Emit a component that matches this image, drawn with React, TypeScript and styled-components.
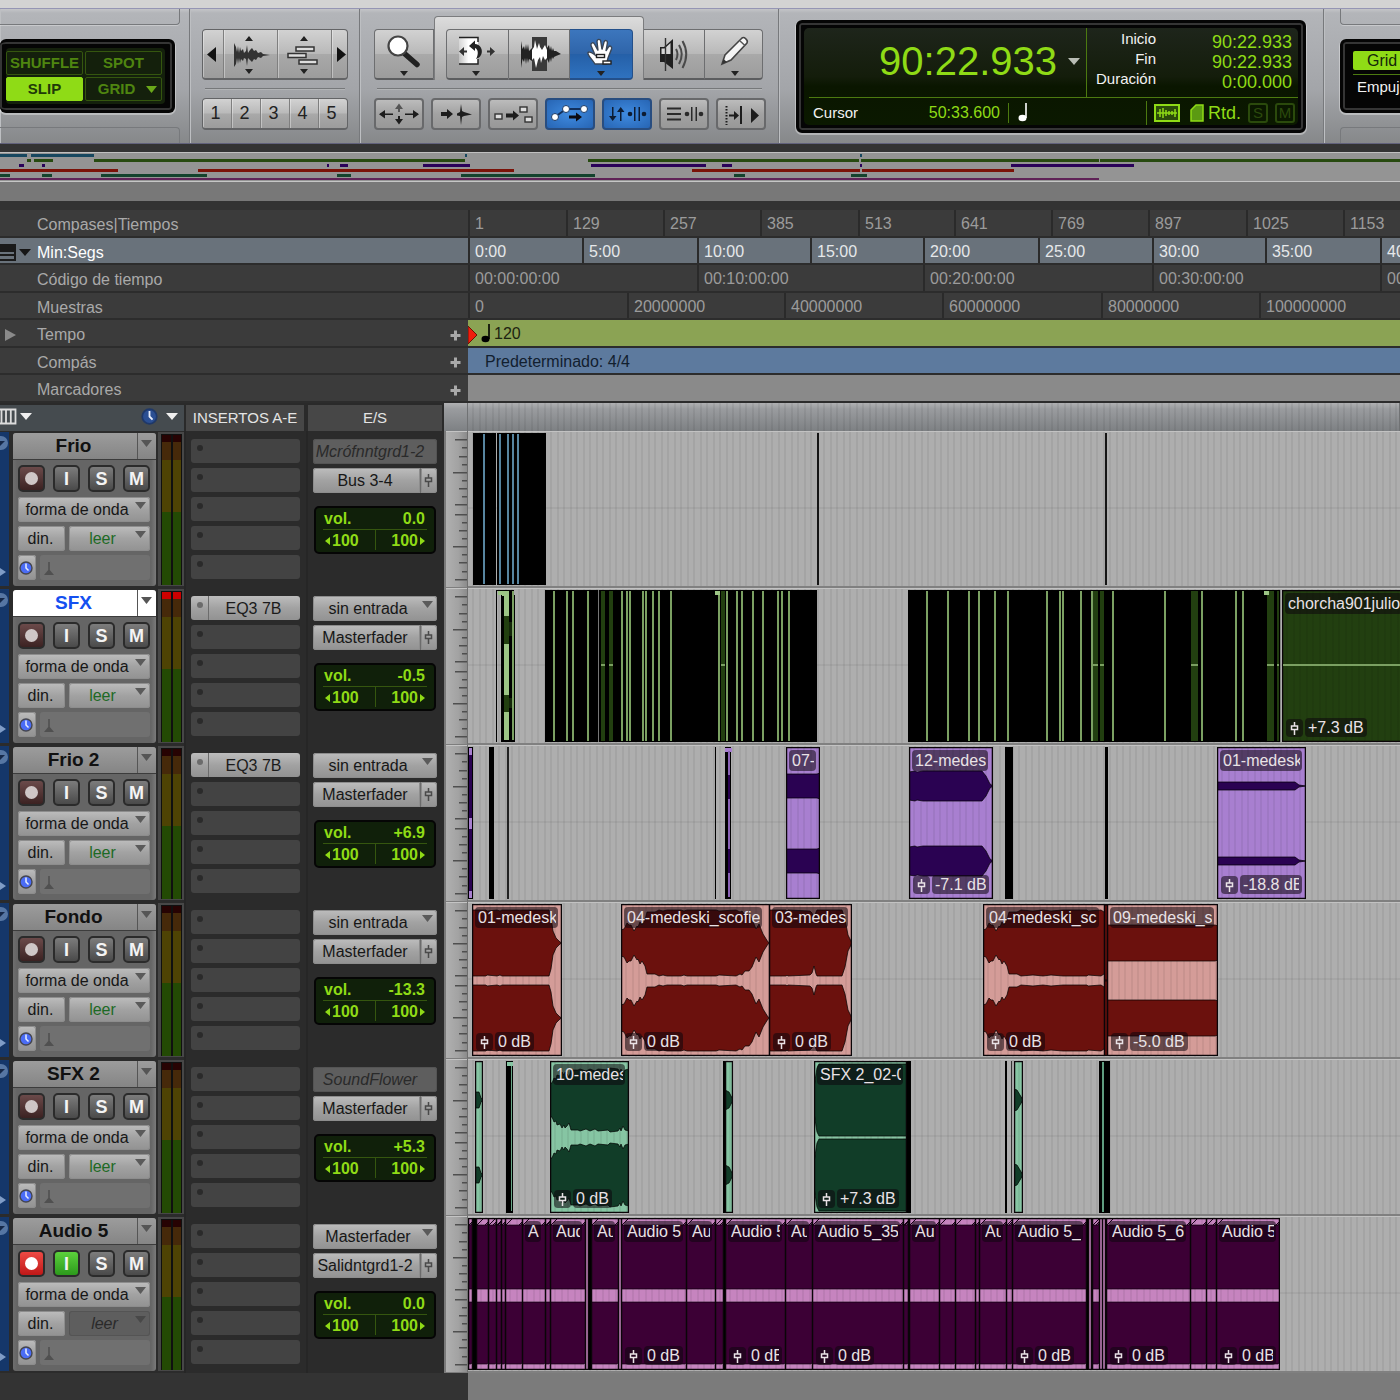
import React from "react";
import styled, { createGlobalStyle, css } from "styled-components";

const LCD = "#8fdb16";
const STRIPES =
  "repeating-linear-gradient(90deg, rgba(0,0,0,0) 0 4px, rgba(0,0,0,0.06) 4px 6px, rgba(0,0,0,0) 6px 11px, rgba(0,0,0,0.06) 11px 13px)";

const GlobalStyle = createGlobalStyle`
  html, body { margin: 0; padding: 0; background: #333; }
  *, *::before, *::after { box-sizing: border-box; }
  body { font-family: "Liberation Sans", Arial, Helvetica, sans-serif; font-size: 16px; overflow: hidden; }
  button, select { font: inherit; color: inherit; margin: 0; padding: 0; border: 0; background: none; cursor: pointer; }
  svg { display: block; }
`;

const Page = styled.div`
  min-height: 100vh;
  display: flex;
  flex-direction: column;
  background: #333;
`;

/* ---------- toolbar ---------- */

const TitleStrip = styled.div`
  height: 9px;
  background: #d3d3d3;
  border-bottom: 1px solid #9595b4;
`;

const Toolbar = styled.header`
  display: flex;
  height: 135px;
  background: linear-gradient(#c4c5c8 0, #b3b5b9 4px, #a3a5a9 60%, #86888a);
  border-bottom: 1px solid #62627c;
`;

const Section = styled.section<{ $w?: number }>`
  flex: ${(p) => (p.$w ? `0 0 ${p.$w}px` : "1 1 0")};
  min-width: 0;
  display: flex;
  flex-direction: column;
  border-right: 1px solid #77797c;
  box-shadow: inset 1px 0 0 #bdbfc2;
  overflow: hidden;
`;

const ModeSection = styled(Section)`
  justify-content: space-between;
  padding-right: 9px;
`;

const GridSection = styled(Section)`
  justify-content: space-between;
  padding-left: 16px;
  border-right: 0;
`;

const Tab = styled.div<{ $edge: "top" | "bottom"; $side: "left" | "right" }>`
  height: 16px;
  border: 1px solid #77797c;
  box-shadow: 0 1px 0 rgba(255, 255, 255, 0.3);
  ${(p) => (p.$edge === "top" ? "border-top: 0;" : "border-bottom: 0;")}
  ${(p) => (p.$side === "right" ? "border-left: 0;" : "border-right: 0;")}
  border-radius: ${(p) =>
    p.$edge === "top"
      ? p.$side === "right" ? "0 0 4px 0" : "0 0 0 4px"
      : p.$side === "right" ? "0 4px 0 0" : "4px 0 0 0"};
`;

const lcdFrame = css`
  border: 3px solid #050505;
  border-radius: 6px;
  background: #050505;
  padding: 4px;
  box-shadow: 0 1px 0 1px rgba(255, 255, 255, 0.35), inset 0 0 0 2px #353535;
`;

const ModeLcd = styled.div`
  ${lcdFrame}
  height: 74px;
  margin-right: 5px;
  border-left-width: 0;
  padding: 6px 7px 6px 6px;
`;

const ModeGrid = styled.div`
  height: 100%;
  display: grid;
  grid-template-columns: 1fr 1fr;
  grid-template-rows: 1fr 1fr;
  gap: 2px;
  padding: 3px 3px 3px 0;
  background: #14200c;
  border-radius: 4px;
`;

const ModeButton = styled.button<{ $on?: boolean; $menu?: boolean }>`
  display: flex;
  align-items: center;
  justify-content: center;
  gap: 11px;
  padding-left: ${(p) => (p.$menu ? 8 : 0)}px;
  font-size: 15px;
  font-weight: bold;
  line-height: 20px;
  border-radius: 2px;
  border: 1px solid ${(p) => (p.$on ? LCD : "#35560f")};
  color: ${(p) => (p.$on ? "#1f3a08" : "#4f8510")};
  background: ${(p) => (p.$on ? LCD : "transparent")};
`;

const ViewControls = styled.div`
  padding: 20px 11px 0 12px;
  display: flex;
  flex-direction: column;
`;

const ToolControls = styled(ViewControls)`
  padding: 7px 13px 0 14px;
`;

const Rule = styled.div`
  height: 2px;
  margin: 8px 3px;
  border-top: 1px solid #76787a;
  border-bottom: 1px solid #b2b4b6;
`;

const buttonFace = css`
  background: linear-gradient(#d2d2d2 0, #b9b9b9 49%, #a9a9a9 51%, #9c9c9c);
`;

const Group = styled.div<{ $h: number }>`
  display: flex;
  height: ${(p) => p.$h}px;
  border: 1px solid #636466;
  border-bottom-width: 2px;
  border-radius: 4px;
  overflow: hidden;
  ${buttonFace}
`;

const GroupButton = styled.button<{ $w?: number }>`
  flex: ${(p) => (p.$w ? `0 0 ${p.$w}px` : "1 1 0")};
  display: flex;
  align-items: center;
  justify-content: center;
  padding-right: 3px;
  font-size: 18px;
  color: #222;
  border-right: 1px solid #7f7f7f;
  box-shadow: inset 1px 0 0 rgba(255, 255, 255, 0.35);
  &:last-child { border-right: 0; }
`;

const ToolRow = styled.div`
  display: flex;
  align-items: flex-end;
  height: 64px;
`;

const SmartTool = styled.div`
  display: flex;
  align-items: flex-end;
  height: 64px;
  padding: 0 10px 0 11px;
  border: 1px solid #7b7c7e;
  border-bottom: 0;
  border-radius: 4px 4px 0 0;
  background: linear-gradient(#dcdcdc, #bcbcbc 60%, #a6a6a6);
`;

const ToolButton = styled.button<{ $w: number; $on?: boolean; $start?: boolean; $end?: boolean }>`
  flex: 0 0 ${(p) => p.$w}px;
  height: 51px;
  ${buttonFace}
  border: 1px solid #6d6e70;
  border-left-width: ${(p) => (p.$start ? 1 : 0)}px;
  border-bottom: 2px solid #5c5d5f;
  border-radius: ${(p) => (p.$start ? 4 : 0)}px ${(p) => (p.$end ? 4 : 0)}px ${(p) => (p.$end ? 4 : 0)}px ${(p) => (p.$start ? 4 : 0)}px;
  overflow: hidden;
  ${(p) =>
    p.$on &&
    css`
      background: linear-gradient(#3c76bd 0, #2f65aa 49%, #2560a8 51%, #2f72bf);
      border-color: #24508a;
    `}
`;

const OptionRow = styled.div`
  display: flex;
  gap: 7px;
`;

const OptionButton = styled.button<{ $on?: boolean }>`
  width: 50px;
  height: 32px;
  border: 2px solid #68696b;
  border-radius: 4px;
  background: linear-gradient(#bcbcbc, #a2a2a2 50%, #989898);
  ${(p) =>
    p.$on &&
    css`
      background: radial-gradient(#3f8be0, #2765b4);
      border-color: #284d80;
    `}
  svg { margin: -2px; }
`;

/* ---------- counter ---------- */

const Counter = styled.div`
  ${lcdFrame}
  margin: 11px 17px 0 17px;
  height: 113px;
  padding: 5px;
`;

const CounterFace = styled.div`
  height: 100%;
  display: grid;
  grid-template-rows: 1fr 27px;
  padding: 0 0 0 5px;
  border-radius: 5px;
  background: linear-gradient(#1e251b, #141d0b 50%, #0a1600 60%, #0b1900);
`;

const CounterTop = styled.div`
  display: flex;
  border-bottom: 1px solid #4c7a10;
`;

const MainTime = styled.div`
  flex: 1;
  display: flex;
  align-items: center;
  justify-content: flex-end;
  gap: 11px;
  padding: 0 6px 3px 0;
  font-size: 40px;
  line-height: 44px;
  color: ${LCD};
`;

const Selection = styled.dl`
  flex: 0 0 212px;
  margin: 0;
  padding: 1px 6px 0 0;
  display: grid;
  grid-template-columns: 69px 1fr;
  grid-auto-rows: 20px;
  align-content: start;
  text-align: right;
  border-left: 1px solid #4c7a10;
  dt { color: #f2f2f2; font-size: 15px; line-height: 20px; }
  dd { margin: 0; color: ${LCD}; font-size: 18px; line-height: 27px; }
`;

const CounterBottom = styled.div`
  display: flex;
  align-items: center;
  padding-top: 2px;
`;

const CursorBox = styled.div`
  flex: 0 0 200px;
  height: 20px;
  display: flex;
  justify-content: space-between;
  align-items: center;
  padding: 0 8px 0 4px;
  border-right: 1px solid #4c7a10;
  color: ${LCD};
  line-height: 18px;
  span { color: #f2f2f2; font-size: 15px; }
`;

const NoteBox = styled.div`
  flex: 1;
  padding-left: 9px;
`;

const StatusBox = styled.div`
  flex: 0 0 152px;
  height: 24px;
  display: flex;
  align-items: center;
  gap: 3px;
  padding-left: 7px;
  border-left: 1px solid #4c7a10;
  color: ${LCD};
  font-size: 18px;
  line-height: 20px;
`;

const StatusFlag = styled.span`
  width: 20px;
  height: 20px;
  margin-left: 4px;
  border: 2px solid #2b4a0c;
  border-radius: 3px;
  color: #2b4a0c;
  font-size: 15px;
  line-height: 16px;
  text-align: center;
`;

const NudgeLcd = styled.div`
  ${lcdFrame}
  width: 160px;
  height: 74px;
  padding: 9px 10px;
`;

const GridButton = styled.button`
  display: block;
  width: 130px;
  height: 19px;
  padding-left: 14px;
  text-align: left;
  line-height: 19px;
  color: #14260a;
  background: ${LCD};
  border-radius: 2px;
`;

const NudgeLabel = styled.div`
  margin-top: 4px;
  padding: 2px 0 0 4px;
  border-top: 1px solid #4c7a10;
  font-size: 15px;
  line-height: 20px;
  color: #f2f2f2;
`;

/* ---------- overview and rulers ---------- */

const Overview = styled.div`
  margin-top: 8px;
  height: 30px;
  background: #949494;
  border-top: 1px solid #c0c0c0;
  border-bottom: 1px solid #c6c6c6;
`;

const OverviewBase = styled.div`
  height: 19px;
  background: #787878;
`;

const Rulers = styled.div`
  margin-top: 9px;
  display: grid;
  grid-template-columns: 468px 1fr;
  grid-template-rows: 28px 27px 28px 27px 28px 27px 28px;
`;

const RulerName = styled.div<{ $on?: boolean }>`
  display: flex;
  align-items: center;
  line-height: 22px;
  padding: 4px 7px 0 0;
  border-bottom: 2px solid #2c2c2c;
  color: ${(p) => (p.$on ? "#fff" : "#a9a9a9")};
  background: ${(p) => (p.$on ? "#69727b" : "#3b3b3b")};
`;

const RulerLead = styled.span`
  flex: 0 0 37px;
`;

const RulerText = styled.span`
  flex: 1;
`;

const RulerTrack = styled.div<{ $bg?: string; $fg?: string }>`
  display: flex;
  min-width: 0;
  overflow: hidden;
  line-height: 27px;
  border-bottom: 2px solid #2c2c2c;
  color: ${(p) => p.$fg || "#9b9b9b"};
  background: ${(p) => p.$bg || "#3b3b3b"};
`;

const Mark = styled.span`
  flex: none;
  padding-left: 5px;
  border-left: 2px solid #2a2a2a;
`;

const TempoMark = styled.span`
  display: flex;
  align-items: center;
  gap: 3px;
  svg:first-child { margin-top: 4px; }
`;

const MeterMark = styled.span`
  padding-left: 17px;
`;

/* ---------- track list ---------- */

const Columns = styled.div`
  display: grid;
  grid-template-columns: 184px 122px 138px 24px 1fr;
  height: 28px;
  background: #2a2a2a;
`;

const ColumnTools = styled.div`
  display: flex;
  align-items: center;
  margin: 2px 0;
  padding: 0 5px 3px 0;
  background: #454b4f;
  svg + svg { margin-left: 3px; }
`;

const Spacer = styled.span`
  flex: 1;
`;

const ColumnHead = styled.div`
  margin: 2px 2px;
  background: #474747;
  color: #e4e4e4;
  font-size: 15px;
  line-height: 26px;
  text-align: center;
`;

const ColumnBar = styled.div<{ $stripes?: boolean }>`
  border-right: 1px solid #707274;
  border-bottom: 1px solid #5c5e60;
  background: ${(p) => (p.$stripes ? `${STRIPES}, ` : "")}linear-gradient(#b0b1b3 0, #9a9c9f 20%, #7c7f82);
`;

const TrackRow = styled.article`
  display: grid;
  grid-template-columns: 11px 147px 26px 122px 138px 24px 1fr;
  height: 157px;
  background: #2b2b2b;
`;

const Strip = styled.div`
  margin: 1px 2px 2px 0;
  background: #15376a;
  display: flex;
  flex-direction: column;
  justify-content: space-between;
  padding: 4px 0 9px;
  overflow: hidden;
`;

const Panel = styled.div`
  margin: 2px;
  padding: 0 6px 0 5px;
  background: linear-gradient(90deg, #6e6e6e, #656565 4px, #656565 138px, #7a7a7a);
  border-radius: 3px;
  display: flex;
  flex-direction: column;
  gap: 4px;
`;

const NameBar = styled.div<{ $on?: boolean }>`
  display: flex;
  height: 27px;
  margin: 0 -6px 0 -5px;
  border-bottom: 1px solid #3c3c3c;
  border-radius: 3px 3px 0 0;
  background: ${(p) => (p.$on ? "#fff" : "linear-gradient(#9c9c9c, #858585)")};
`;

const NameButton = styled.button<{ $on?: boolean }>`
  flex: 1;
  padding-right: 3px;
  font-size: 19px;
  font-weight: bold;
  line-height: 26px;
  color: ${(p) => (p.$on ? "#1450f0" : "#111")};
`;

const NameMenu = styled.button`
  flex: 0 0 19px;
  padding: 0 0 6px 3px;
  border-left: 1px solid #555;
`;

const SwitchRow = styled.div`
  display: flex;
  justify-content: space-between;
  height: 29px;
  padding: 1px 0 0;
`;

const SwitchButton = styled.button<{ $tone?: "rec" | "armed" | "green" }>`
  width: 27px;
  height: 27px;
  display: flex;
  align-items: center;
  justify-content: center;
  border: 2px solid #2b2b2b;
  border-radius: 5px;
  font-size: 18px;
  font-weight: bold;
  line-height: 22px;
  color: #f4f4f4;
  background: ${(p) =>
    p.$tone === "rec"
      ? "linear-gradient(#6b4a4a, #3c2222)"
      : p.$tone === "armed"
      ? "linear-gradient(#ee4a44, #c01818)"
      : p.$tone === "green"
      ? "linear-gradient(#5cd03c, #2c9a1c)"
      : "linear-gradient(#7c7c7c, #4a4a4a)"};
`;

const FieldRow = styled.div`
  display: flex;
  gap: 4px;
  height: 25px;
`;

const face = css<{ $off?: boolean }>`
  height: 25px;
  border-radius: 3px;
  background: ${(p) => (p.$off ? "#5e5e5e" : "linear-gradient(#bdbdbd, #a2a2a2 50%, #929292)")};
  box-shadow: inset 0 0 0 1px ${(p) => (p.$off ? "#545454" : "#8d8d8d")};
  color: ${(p) => (p.$off ? "#2a2a2a" : "#171717")};
  font-style: ${(p) => (p.$off ? "italic" : "normal")};
`;

const SelectBox = styled.label<{ $off?: boolean; $green?: boolean }>`
  ${face}
  flex: 1;
  min-width: 0;
  display: grid;
  ${(p) => p.$green && "color: #1d6a25;"}
  select {
    grid-area: 1 / 1;
    width: 100%;
    appearance: none;
    line-height: 25px;
    text-align: center;
    font-style: inherit;
    color: inherit;
    opacity: 1;
    padding-right: ${(p) => (p.$off ? 10 : 14)}px;
  }
  svg { grid-area: 1 / 1; justify-self: end; margin: 5px 4px 0 0; pointer-events: none; }
`;

const SmallButton = styled.button<{ $w: number }>`
  ${face}
  flex: 0 0 ${(p) => p.$w}px;
  display: flex;
  align-items: center;
  justify-content: center;
  padding-right: 2px;
`;

const GroupSlot = styled.div`
  flex: 1;
  border-radius: 3px;
  background: #707070;
  padding: 7px 0 0 3px;
`;

const MeterCell = styled.div`
  margin: 1px 0 2px;
  padding: 2px 2px 1px 3px;
  background: #474747;
`;

const Meter = styled.div<{ $clip?: boolean }>`
  height: 100%;
  display: grid;
  grid-template-columns: 1fr 1fr;
  gap: 2px;
  padding: 1px 1px 0;
  background: #101010;
  span {
    background: linear-gradient(
      ${(p) => (p.$clip ? "#cc0000" : "#270303")} 0 7px,
      #46290a 7px 25px,
      #4e4304 25px 77px,
      #234a04 77px
    );
  }
`;

const Slots = styled.div`
  border-left: 2px solid #262626;
  padding: 8px 6px 0 5px;
  display: flex;
  flex-direction: column;
  gap: 5px;
`;

const Slot = styled.button<{ $used?: boolean }>`
  display: flex;
  height: 24px;
  border-radius: 3px;
  line-height: 25px;
  color: #1b1b1b;
  background: ${(p) => (p.$used ? "linear-gradient(#bdbdbd, #a2a2a2 50%, #929292)" : "#434343")};
  span { flex: 1; padding-right: 2px; border-left: ${(p) => (p.$used ? "1px solid #6c6c6c" : "0")}; }
  svg { margin: 0 4px 0 5px; }
`;

const Io = styled.div`
  padding: 8px 7px 0 5px;
  display: flex;
  flex-direction: column;
  gap: 4px;
  border-left: 2px solid #262626;
`;

const OutputName = styled.button`
  ${face}
  flex: 1;
  padding-right: 3px;
  border-radius: 3px 0 0 3px;
  line-height: 25px;
`;

const OutputFader = styled.button`
  ${face}
  flex: 0 0 17px;
  border-radius: 0 3px 3px 0;
  border-left: 1px solid #6c6c6c;
  padding-left: 3px;
`;

const OutputRow = styled.div`
  display: flex;
  height: 25px;
`;

const VolumeLcd = styled.div`
  margin: 9px 1px 0;
  height: 48px;
  border: 2px solid #050505;
  border-radius: 5px;
  background: #10200a;
  padding: 1px 7px 3px;
  font-weight: bold;
  line-height: 20px;
  color: ${LCD};
`;

const VolumeLine = styled.div`
  display: flex;
  justify-content: space-between;
  height: 21px;
  padding: 0 2px 0 1px;
  border-bottom: 1px solid #35560f;
`;

const PanLine = styled.div`
  display: grid;
  grid-template-columns: 1fr 1fr;
  height: 20px;
  line-height: 20px;
  span { display: flex; align-items: center; gap: 2px; height: 20px; padding: 2px 0 0 2px; }
  span + span { justify-content: flex-end; padding: 2px 2px 0 0; border-left: 1px solid #35560f; }
`;

const Scale = styled.div`
  border-left: 2px solid #7a7a7a;
  border-right: 1px solid #6f6f6f;
  border-bottom: 1px solid #7d7d7d;
  background: linear-gradient(90deg, #b0b0b0, #a2a2a2 60%, #8b8b8b);
  box-shadow: inset 0 1px 0 #c4c4c4;
  overflow: hidden;
`;

const Lane = styled.div`
  position: relative;
  overflow: hidden;
  border-bottom: 2px solid #808080;
  background: linear-gradient(#c2c2c2 0 1px, rgba(0,0,0,0) 1px 76px, rgba(0,0,0,.05) 76px 78px, rgba(0,0,0,0) 78px), ${STRIPES}, #aeaeae;
`;

const LaneArt = styled.svg`
  position: absolute;
  left: 0;
  top: 2px;
`;

const ClipBox = styled.div`
  position: absolute;
  top: 2px;
  height: 152px;
  overflow: hidden;
`;

const ClipSvg = styled.svg`
  position: absolute;
  left: 0;
  top: 0;
`;

const ClipName = styled.div`
  position: absolute;
  left: 3px;
  top: 3px;
  max-width: calc(100% - 7px);
  height: 21px;
  padding: 0 2px 0 3px;
  border-radius: 4px;
  background: rgba(12, 6, 12, 0.55);
  color: #e9e2e6;
  line-height: 22px;
  white-space: nowrap;
  span { display: block; overflow: hidden; }
`;

const Gain = styled.div`
  position: absolute;
  left: 4px;
  right: 4px;
  bottom: 5px;
  display: flex;
  gap: 2px;
  height: 19px;
  color: #e9e2e6;
  white-space: nowrap;
`;

const GainIcon = styled.span`
  flex: 0 0 17px;
  height: 18px;
  margin-top: 1px;
  padding: 2px 0 0 4px;
  border-radius: 4px;
  background: rgba(12, 6, 12, 0.55);
`;

const GainText = styled.span`
  min-width: 0;
  padding: 0 3px;
  border-radius: 4px;
  line-height: 20px;
  background: rgba(12, 6, 12, 0.55);
  span { display: block; overflow: hidden; }
`;

const Footer = styled.div`
  flex: 1;
  display: grid;
  grid-template-columns: 468px 1fr;
  div + div { background: #7b7b7b; }
`;

/* ---------- drawings ---------- */

const Tri = ({ w = 12, h = 7, c = "#4a4a4a" }: { w?: number; h?: number; c?: string }) => (
  <svg width={w} height={h} viewBox="0 0 12 7" preserveAspectRatio="none"><path d="M0 0H12L6 7Z" fill={c} /></svg>
);
const Side = ({ left, c = "#111", w = 9, h = 15 }: { left?: boolean; c?: string; w?: number; h?: number }) => (
  <svg width={w} height={h} viewBox="0 0 9 15" preserveAspectRatio="none"><path d={left ? "M9 0V15L0 7.5Z" : "M0 0V15L9 7.5Z"} fill={c} /></svg>
);
const Fader = ({ c = "#4a4a4a" }: { c?: string }) => (
  <svg width="9" height="15" viewBox="0 0 9 15" fill="none" stroke={c} strokeWidth="1.5"><path d="M4.5 1V5M4.5 8.500V14" /><rect x="1.500" y="5" width="6" height="3.500" /></svg>
);
const Plus = () => (
  <svg width="11" height="11" viewBox="0 0 11 11"><path d="M4 0.500H7V4H10.500V7H7V10.500H4V7H0.500V4H4Z" fill="#a9a9a9" /></svg>
);
const Clock = ({ size = 14, bright }: { size?: number; bright?: boolean }) => (
  <svg width={size} height={size} viewBox="0 0 14 14"><circle cx="7" cy="7" r="6" fill={bright ? "#4a6cf5" : "#2b4f93"} stroke={bright ? "#44454f" : "#1f3868"} strokeWidth="1.4" /><path d="M7 2.500V7L9.500 9.500" stroke="#e8eefc" strokeWidth="1.500" fill="none" /></svg>
);
const Note = ({ c }: { c: string }) => (
  <svg width="10" height="19" viewBox="0 0 10 19"><ellipse cx="4.500" cy="15" rx="4" ry="3.200" fill={c} /><path d="M8 0V15" stroke={c} strokeWidth="1.600" /></svg>
);
const WaveGlyph = () => (
  <path d="M0 12V-12L2-8 3-3 4-9 5-2 6-8 7-4 9-6 10-2 12-4 13-10 14-2 16-5 18-7 20-4 22-5 24-2 27-3 29-1 36 0 29 1 27 3 24 2 22 5 20 4 18 7 16 5 14 3 13 11 12 4 10 3 9 6 7 4 6 8 5 3 4 9 3 3 2 9Z" />
);

const ZoomAudio = () => (
  <svg width="50" height="48" viewBox="0 0 50 48" fill="#333"><path d="M21 11L25 6 29 11ZM21 39H29L25 44Z" fill="#222" /><g transform="translate(10 25)"><WaveGlyph /></g></svg>
);
const ZoomMidi = () => (
  <svg width="50" height="48" viewBox="0 0 50 48"><path d="M22 11L26 6 30 11ZM22 39H30L26 44Z" fill="#222" /><g fill="#ddd" stroke="#333" strokeWidth="1.500"><rect x="18" y="17" width="18" height="4" /><rect x="10" y="23.500" width="18" height="4" /><rect x="21" y="30" width="18" height="4" /></g></svg>
);

const ToolMagnifier = () => (
  <svg width="60" height="48" viewBox="0 0 60 48"><path d="M30 24L42 34.500" stroke="#222" strokeWidth="5.500" strokeLinecap="round" /><circle cx="23" cy="16" r="9.500" fill="#fff" stroke="#444" strokeWidth="2.200" /><path d="M25 41H33L29 46Z" fill="#222" /></svg>
);
const ToolTrim = () => (
  <svg width="60" height="48" viewBox="0 0 60 48"><defs><linearGradient id="trim"><stop offset="0" stopColor="#fff" stopOpacity=".3" /><stop offset=".5" stopColor="#fff" /></linearGradient></defs><path d="M12 7H31V34H12Z" fill="url(#trim)" /><path d="M12 7.500H31V12M12 34H31V29M31 17V20" stroke="#222" strokeWidth="1.500" fill="none" /><path d="M22 16L28 10.500V14C37 15 37 27 29 29 32 24 31 19 28 18V21Z" fill="#222" /><path d="M12 21.500L17 17V20.500H20V22.500H17V26ZM48 21.500L43 17V20.500H40V22.500H43V26Z" fill="#333" /><path d="M25 41H33L29 46Z" fill="#222" /></svg>
);
const ToolSelect = () => (
  <svg width="60" height="48" viewBox="0 0 60 48"><rect x="23" y="7" width="15" height="34" fill="#3a3a3a" /><g fill="#222" transform="translate(12 24)"><path d="M0 14V-13L1.500-5 3-8 4-4 5-10 6-4 7-10 8-3 11-6V7L8 5 7 9 6 4 5 10 4 4 3 8 1.500 5Z" /><path d="M26-6L28-9 29-4 30-8 31-3 32-6 33-3 35-3 40 0 35 2 33 3 32 5 31 3 30 8 29 4 28 9 26 5Z" /></g><path d="M23 20L25 17 26 10 28 19 30 13 31 17 33 20 36 15 38 20V28L36 30 34 26 32 33 31 27 29 30 27 38 25 28 23 30Z" fill="#fff" /></svg>
);
const ToolHand = () => (
  <svg width="60" height="48" viewBox="0 0 60 48"><path d="M25 34C22 29 17 25 18 22.500 20 20.500 23 23.500 25 25L21 15.500C20.500 12.500 23.500 12 24.500 14L28 20.500 27 11.500C27 8.800 30.300 8.800 30.700 11L32 19.500 34 12C35 9.500 37.800 10.500 37.400 13L36 21 38.500 17C40 15 42.300 16.500 41.500 19L38 28 36.500 34Z" fill="#fff" stroke="#3a4656" strokeWidth="1.400" /><rect x="26.500" y="24.500" width="8" height="3" fill="#fff" stroke="#222" strokeWidth="1.400" /><rect x="33" y="31" width="8" height="3" fill="#fff" stroke="#222" strokeWidth="1.400" /><path d="M27 41H35L31 46Z" fill="#222" /></svg>
);
const ToolSpeaker = () => (
  <svg width="60" height="48" viewBox="0 0 60 48"><path d="M16 17H20L29 9V39L20 32H16Z" fill="#1f1f1f" /><path d="M17.500 18.500H20.500L26.500 13V24H17.500Z" fill="#d4d4d4" /><path d="M21.500 8V41" stroke="#333" strokeWidth="1.400" /><g fill="none" stroke="#4a4a4a" strokeWidth="2"><path d="M32 19Q35 24 32 30" /><path d="M35 15Q40.500 24 35 34" /><path d="M38.500 11Q46 24 38.500 38" /></g></svg>
);
const ToolPencil = () => (
  <svg width="58" height="48" viewBox="0 0 58 48"><path d="M17 34L20 25 37 8C39 6.500 43.500 10 42 13L26 30Z" fill="#f5f5f5" stroke="#444" strokeWidth="1.600" /><path d="M17 34L18.500 29 22 32Z" fill="#333" /><path d="M35 11L40 15.500" stroke="#555" strokeWidth="1.500" /><path d="M26 41H34L30 46Z" fill="#222" /></svg>
);

const optionArt: React.ReactNode[] = [
  <g key="a" fill="#1d1d1d"><path d="M6 15.500H19V17H6ZM31 15.500H44V17H31Z" /><path d="M5 16.200L11 12V20.500ZM45 16.200L39 12V20.500ZM25 26.500L21 21H24V18H26V21H29Z" /><path d="M25 5.500L21 11H24V14H26V11H29Z" fill="#555" /></g>,
  <g key="b" fill="#1d1d1d"><path d="M10 14H16V11L22 16 16 21V18H10Z" /><path d="M26 15.500L29 14 30 6 31 13 33 14 41 16.500 33 18 31 19 30 27 29 18 26 17.500Z" /></g>,
  <g key="c" fill="#1d1d1d"><path d="M18 15.500H25V12.500L31 17.500 25 22.500V19.500H18Z" /><g fill="#ddd" stroke="#333" strokeWidth="1.400"><rect x="7" y="16" width="7" height="5" /><rect x="32" y="9" width="7" height="5" /><rect x="37" y="19" width="7" height="5" /></g></g>,
  <g key="d"><path d="M10 19L21 11H39" fill="none" stroke="#12305c" strokeWidth="1.800" /><path d="M24 17.500H31V14.500L37 19 31 23.500V20.500H24Z" fill="#0b0b12" /><g fill="#fff" stroke="#1a3a66"><circle cx="10" cy="19" r="3.500" /><circle cx="21" cy="11" r="3.500" /><circle cx="39" cy="11" r="3.500" /></g></g>,
  <g key="e" fill="#0d1c33"><path d="M10 9H11.500V18H14.500L10.700 23 7 18H10ZM18 23H19.500V14H22.500L18.700 9 15 14H18Z" /><circle cx="28" cy="16" r="2.300" /><circle cx="42" cy="16" r="2.300" /><path d="M32 9H33.500V23H32ZM36.500 9H38V23H36.500Z" /></g>,
  <g key="f" fill="#2a2a2a"><path d="M8 9.500H22V11.500H8ZM8 15H22V17H8ZM8 20.500H22V22.500H8Z" /><circle cx="28" cy="16" r="2.300" /><circle cx="42" cy="16" r="2.300" /><path d="M32 9H33.500V23H32ZM36.500 9H38V23H36.500Z" /></g>,
  <g key="g" fill="#1d1d1d"><path d="M10.500 8V27" stroke="#1d1d1d" strokeWidth="2" strokeDasharray="1.500 1.500" /><path d="M13 16.500H18V13L23 17.500 18 22V18.500H13ZM24 8H26V26H24ZM35 10V25L43 17.500Z" /></g>,
];
const optionNames = ["Zoom", "Tab a transitorio", "Enlazar pistas", "Automatización", "Inserción", "Enlace", "Reproducir"];

type Seg = [number, number];
const overviewRows: { y: number; h: number; c: string; s: Seg[] }[] = [
  { y: 1, h: 3, c: "#17475f", s: [[0, 27], [31, 94], [465, 467], [860, 862]] },
  { y: 6, h: 3, c: "#274a10", s: [[27, 31], [34, 53], [94, 465], [588, 859], [861, 1099], [1100, 4000]] },
  { y: 11, h: 3, c: "#2a0259", s: [[19, 24], [42, 45], [327, 329], [340, 348], [423, 470], [591, 706], [722, 732], [860, 862], [1011, 1134]] },
  { y: 16, h: 3, c: "#7a1208", s: [[0, 118], [198, 514], [692, 860], [862, 1014]] },
  { y: 21, h: 3, c: "#14432d", s: [[0, 10], [42, 52], [101, 207], [337, 351], [461, 595], [734, 745], [851, 867]] },
  { y: 25, h: 2, c: "#5f2357", s: [[0, 1099]] },
];

/* Ruler marks: label and the distance of its tick from the start of the timeline. */
type MarkData = [string, number][];
const bars: MarkData = [["1", 0], ["129", 98], ["257", 195], ["385", 292], ["513", 390], ["641", 486], ["769", 583], ["897", 680], ["1025", 778], ["1153", 875], ["1281", 972]];
const minutes: MarkData = [["0:00", 0], ["5:00", 114], ["10:00", 229], ["15:00", 342], ["20:00", 455], ["25:00", 570], ["30:00", 684], ["35:00", 797], ["40:00", 912]];
const timecode: MarkData = [["00:00:00:00", 0], ["00:10:00:00", 229], ["00:20:00:00", 455], ["00:30:00:00", 684], ["00:40:00:00", 912]];
const samples: MarkData = [["0", 0], ["20000000", 159], ["40000000", 316], ["60000000", 474], ["80000000", 633], ["100000000", 791]];

function Marks({ data }: { data: MarkData }) {
  return (
    <>
      {data.map(([label, at], i) => (
        <Mark key={label} style={{ width: (data[i + 1] ? data[i + 1][1] : at + 160) - at }}>{label}</Mark>
      ))}
    </>
  );
}

/* ---------- clips ---------- */

type Point = [number, number];
interface ClipData {
  x: number;
  w: number;
  name?: string;
  gain?: string;
  env?: Point[];
  block?: boolean;
}

const CENTERS = [39, 114];

function wavePath(env: Point[]) {
  return CENTERS.map((c) => {
    const up = env.map(([x, a]) => `${x} ${c - a}`).join("L");
    const down = [...env].reverse().map(([x, a]) => `${x} ${c + a}`).join("L");
    return `M${up}L${down}Z`;
  }).join("");
}

function Clip({ clip, light, dark }: { clip: ClipData; light: string; dark: string }) {
  const { x, w, name, gain, env, block } = clip;
  return (
    <ClipBox style={{ left: x, width: w, background: `${STRIPES}, ${light}` }}>
      <ClipSvg width={w} height={152}>
        {env && <path d={wavePath(env)} fill={dark} stroke="#000" strokeOpacity=".7" />}
        {block && (
          <g>
            <path d={`M0 7H${w - 2}V6L${w} 5V71H0ZM0 84H${w}V144L${w - 2} 146H0Z`} fill={dark} stroke="#000" strokeOpacity=".6" />
            <path d={`M0 8L7 1M${w - 4} 7L${w} 3`} stroke="#1a0018" fill="none" />
          </g>
        )}
        <rect x=".5" y=".5" width={w - 1} height="151" fill="none" stroke="#0a0508" strokeWidth="1.500" />
      </ClipSvg>
      {name && <ClipName><span>{name}</span></ClipName>}
      {gain && (
        <Gain>
          <GainIcon><Fader c="#e9e2e6" /></GainIcon>
          <GainText><span>{gain}</span></GainText>
        </Gain>
      )}
    </ClipBox>
  );
}

type Rect = [number, number, string, number?, number?];
const K = "#000";
const G = "#7ba062";
const DG = "#223f10";

const greenLines = [85, 98, 104, 119, 153, 158, 161, 174, 177, 184, 190, 202, 250, 258, 268, 273, 284, 294, 309, 313, 320, 458, 479, 500, 510, 526, 539, 578, 591, 594, 612, 623, 644, 696, 733, 767, 774];
const darkLines: Seg[] = [[133, 4], [141, 4], [253, 4], [625, 5], [632, 4], [723, 7], [799, 7], [809, 2]];

const sfxArt: Rect[] = [
  [28, 1, K], [29, 11, K, 0, 1], [30, 9, "#9cc585", 1, 4], [33, 14, K, 5, 147], [36, 10, K, 0, 6], [34, 7, "#9cc585", 1, 5], [36, 5, "#9cc585", 1, 149], [36, 5, DG, 26, 28], [41, 3, "#14260a", 32, 14], [36, 5, DG, 105, 17], [41, 3, "#14260a", 108, 10], [44, 2, G, 1, 149],
  [77, 272, K], [130, 1, "#777"], [440, 372, K], [812, 1, "#888"],
  ...greenLines.map((x): Rect => [x, 2, G, 1, 150]),
  ...darkLines.map(([x, w]): Rect => [x, w, DG, 1, 150]),
  ...darkLines.map(([x, w]): Rect => [x, w, G, 74, 2]),
  [247, 5, "#9cc585", 1, 4], [796, 5, "#9cc585", 1, 4],
];

const fullTail = (start: number, end: number): Point[] => [[start, 33], [start + 2, 26], [start + 4, 12], [start + 7, 5], [start + 11, 1], [end, 0]];
const intro: Point[] = [[0, 13], [3, 14], [6, 20], [8, 18], [10, 18], [13, 12], [16, 17], [17, 16], [19, 21], [21, 18], [24, 23], [26, 31], [34, 31], [38, 33]];

interface TrackData {
  name: string;
  selected?: boolean;
  armed?: boolean;
  insert?: string;
  input: string;
  inputOff?: boolean;
  output: string;
  vol: string;
  light: string;
  dark: string;
  art: Rect[];
  clips: ClipData[];
}

const blocks: ClipData[] = [
  { x: 0, w: 5 }, { x: 8, w: 13 }, { x: 20, w: 9 }, { x: 28, w: 6 }, { x: 33, w: 5 }, { x: 37, w: 18 },
  { x: 54, w: 24, name: "A" }, { x: 77, w: 6 }, { x: 82, w: 36, name: "Aud" }, { x: 117, w: 4 }, { x: 123, w: 28, name: "Au" }, { x: 150, w: 4 },
  { x: 153, w: 66, name: "Audio 5", gain: "0 dB" }, { x: 218, w: 30, name: "Au" }, { x: 247, w: 9 },
  { x: 257, w: 61, name: "Audio 5", gain: "0 dB" }, { x: 317, w: 28, name: "Au" }, { x: 344, w: 92, name: "Audio 5_35", gain: "0 dB" }, { x: 435, w: 6 },
  { x: 441, w: 31, name: "Au" }, { x: 471, w: 17 }, { x: 487, w: 21 }, { x: 507, w: 5 }, { x: 511, w: 28, name: "Au" }, { x: 538, w: 7 },
  { x: 544, w: 75, name: "Audio 5_", gain: "0 dB" }, { x: 620, w: 4 }, { x: 624, w: 8 }, { x: 631, w: 4 }, { x: 634, w: 4 },
  { x: 638, w: 85, name: "Audio 5_6", gain: "0 dB" }, { x: 722, w: 17 }, { x: 738, w: 11 }, { x: 748, w: 64, name: "Audio 5", gain: "0 dB" },
].map((c) => ({ ...c, block: c.w > 4 }));

const tracks: TrackData[] = [
  {
    name: "Frio", input: "Mcrófnntgrd1-2", inputOff: true, output: "Bus 3-4", vol: "0.0", light: "#5b8aa5", dark: K, clips: [],
    art: [[5, 23, K], [29, 49, K], ...[15, 31, 39, 44, 49].map((x): Rect => [x, 2, "#5785a0", 1, 150]), [349, 2, "#151515"], [637, 2, "#151515"]],
  },
  {
    name: "SFX", selected: true, insert: "EQ3 7B", input: "sin entrada", output: "Masterfader", vol: "-0.5", light: DG, dark: DG, art: sfxArt,
    clips: [{ x: 814, w: 400, name: "chorcha901julio", gain: "+7.3 dB" }],
  },
  {
    name: "Frio 2", insert: "EQ3 7B", input: "sin entrada", output: "Masterfader", vol: "+6.9", light: "#a87fd0", dark: "#2a0252",
    art: [[0, 5, K], [1, 3, "#2a0252", 1, 150], [1, 3, "#a87fd0", 1, 7], [1, 3, "#a87fd0", 71, 11], [1, 3, "#a87fd0", 144, 7], [21, 5, K], [39, 2, "#222"], [247, 1, K], [257, 6, K], [257, 7, "#a87fd0", 1, 4], [260, 2, "#8a62b5", 4, 146], [260, 2, "#2a0252", 28, 24], [260, 2, "#2a0252", 102, 24], [537, 8, K], [637, 3, K]],
    clips: [
      { x: 318, w: 34, name: "07-", env: [[0, 12], [31, 12], [34, 13]] },
      { x: 441, w: 84, name: "12-medes", gain: "-7.1 dB", env: [[0, 14], [6, 15], [8, 14], [14, 15], [20, 15], [73, 15], [77, 10], [81, 2], [84, 0]] },
      { x: 749, w: 89, name: "01-medesk", gain: "-18.8 dB", env: [[0, 4], [78, 4], [82, 1], [89, 0]] },
    ],
  },
  {
    name: "Fondo", input: "sin entrada", output: "Masterfader", vol: "-13.3", light: "#d49c98", dark: "#6b110d",
    art: [],
    clips: [
      { x: 4, w: 90, name: "01-medesk", gain: "0 dB", env: [[0, 33], [14, 33], [15, 32], [25, 33], [28, 32], [30, 33], ...fullTail(77, 90)] },
      { x: 153, w: 149, name: "04-medeski_scofie", gain: "0 dB", env: [...intro, [42, 32], [46, 33], [60, 33], [63, 32], [66, 33], [95, 33], [98, 32], [115, 33], [119, 31], [121, 32], [124, 28], [128, 28], [131, 24], [135, 14], [138, 19], [142, 9], [147, 1], [149, 0]] },
      { x: 301, w: 83, name: "03-medes", gain: "0 dB", env: [[0, 33], [17, 33], [18, 32], [19, 33], [41, 32], [43, 30], [45, 23], [47, 31], [48, 33], [73, 33], [76, 24], [79, 8], [83, 0]] },
      { x: 515, w: 122, name: "04-medeski_sc", gain: "0 dB", env: [...intro, [50, 32], [60, 33], [68, 32], [80, 33], [104, 33], [105, 32], [118, 33], [121, 31], [122, 31]] },
      { x: 636, w: 4, env: [[0, 38], [4, 38]] },
      { x: 639, w: 111, name: "09-medeski_s", gain: "-5.0 dB", env: [[0, 18], [108, 18], [111, 17]] },
    ],
  },
  {
    name: "SFX 2", input: "SoundFlower", inputOff: true, output: "Masterfader", vol: "+5.3", light: "#86c5a3", dark: "#113d28",
    art: [[38, 7, K], [39, 6, "#86c5a3", 1, 4], [43, 1, "#6aa688", 5, 145], [255, 4, K], [439, 4, K, 0, 152], [537, 2, K], [543, 1, "#333"], [631, 11, K], [634, 2, "#5f9c7f", 1, 150]],
    clips: [
      { x: 7, w: 8, env: [[0, 8], [4, 8], [6, 2], [8, 0]] },
      { x: 82, w: 79, name: "10-medes", gain: "0 dB", env: [[0, 17], [2, 17], [4, 22], [6, 21], [7, 25], [10, 24], [12, 28], [14, 25], [15, 28], [17, 26], [19, 23], [21, 30], [28, 30], [30, 31], [36, 29], [40, 31], [45, 29], [48, 31], [58, 30], [60, 32], [68, 31], [70, 28], [71, 31], [73, 26], [75, 30], [79, 31]] },
      { x: 257, w: 8, env: [[0, 10], [4, 8], [6, 4], [8, 1]] },
      { x: 346, w: 93, name: "SFX 2_02-0", gain: "+7.3 dB", env: [[0, 12], [2, 26], [3, 32], [5, 36], [93, 36]] },
      { x: 546, w: 9, env: [[0, 11], [3, 10], [6, 5], [9, 0]] },
    ],
  },
  {
    name: "Audio 5", armed: true, input: "Masterfader", output: "Salidntgrd1-2", vol: "0.0", light: "#c684bf", dark: "#3c0035",
    art: [[0, 812, K]],
    clips: blocks,
  },
];

const ticks: Seg[] = [[8, 12], [16, 5], [25, 8], [33, 5], [41, 14], [49, 5], [57, 8], [65, 5], [73, 12], [83, 12], [91, 5], [99, 8], [107, 5], [115, 14], [123, 5], [131, 8], [140, 5], [148, 12]];

function Track({ t }: { t: TrackData }) {
  return (
    <TrackRow>
      <Strip>
        <svg width="9" height="14" viewBox="0 0 9 14"><circle cx="1" cy="7" r="7" fill="#5676a3" /><path d="M-4 5H5L0 10Z" fill="#16294a" /></svg>
        <svg width="9" height="10" viewBox="0 0 9 10"><path d="M0 1L6 5 0 9Z" fill="#7f9cc6" /></svg>
      </Strip>
      <Panel>
        <NameBar $on={t.selected}>
          <NameButton $on={t.selected}>{t.name}</NameButton>
          <NameMenu aria-label={`Menú de ${t.name}`}><Tri w={11} c="#555" /></NameMenu>
        </NameBar>
        <SwitchRow>
          <SwitchButton $tone={t.armed ? "armed" : "rec"} aria-label="Grabar"><svg width="15" height="15"><circle cx="7.500" cy="7.500" r="6.500" fill={t.armed ? "#fff" : "#cfc6c6"} /></svg></SwitchButton>
          <SwitchButton $tone={t.armed ? "green" : undefined}>I</SwitchButton>
          <SwitchButton>S</SwitchButton>
          <SwitchButton>M</SwitchButton>
        </SwitchRow>
        <FieldRow>
          <SelectBox><select aria-label="Vista de pista"><option>forma de onda</option></select><Tri w={11} c="#5a5a5a" /></SelectBox>
        </FieldRow>
        <FieldRow>
          <SmallButton $w={47}>din.</SmallButton>
          <SelectBox $off={t.armed} $green={!t.armed}><select aria-label="Automatización"><option>leer</option></select><Tri w={11} c={t.armed ? "#484848" : "#5a5a5a"} /></SelectBox>
        </FieldRow>
        <FieldRow>
          <SmallButton $w={18} aria-label="Base de tiempo"><Clock bright /></SmallButton>
          <GroupSlot><svg width="12" height="13" viewBox="0 0 12 13"><path d="M5.200 0H6.800V8L11 13H1L5.200 8Z" fill="#505050" /></svg></GroupSlot>
        </FieldRow>
      </Panel>
      <MeterCell><Meter $clip={t.selected}><span /><span /></Meter></MeterCell>
      <Slots>
        {[0, 1, 2, 3, 4].map((i) => {
          const used = i === 0 && !!t.insert;
          return (
            <Slot key={i} $used={used} aria-label={used ? undefined : "Inserto vacío"}>
              <svg width="8" height="17"><circle cx="4" cy="9" r="3" fill={used ? "#6b6b6b" : "#2a2a2a"} /></svg>
              <span>{used ? t.insert : ""}</span>
            </Slot>
          );
        })}
      </Slots>
      <Io>
        <FieldRow>
          <SelectBox $off={t.inputOff}><select aria-label="Entrada"><option>{t.input}</option></select>{!t.inputOff && <Tri w={11} c="#5a5a5a" />}</SelectBox>
        </FieldRow>
        <OutputRow>
          <OutputName>{t.output}</OutputName>
          <OutputFader aria-label="Fader"><Fader /></OutputFader>
        </OutputRow>
        <VolumeLcd>
          <VolumeLine><span>vol.</span><span>{t.vol}</span></VolumeLine>
          <PanLine>
            <span><Side left w={5} h={8} c={LCD} />100</span>
            <span>100<Side w={5} h={8} c={LCD} /></span>
          </PanLine>
        </VolumeLcd>
      </Io>
      <Scale>
        <svg width="21" height="155">{ticks.map(([y, w]) => <rect key={y} x={21 - w} y={y} width={w} height="1.500" fill="#4f4f4f" />)}</svg>
      </Scale>
      <Lane>
        <LaneArt width="100%" height="152">
          {t.art.map(([x, w, c, y = 0, h = 152], i) => <rect key={i} x={x} y={y} width={w} height={h} fill={c} />)}
        </LaneArt>
        {t.clips.map((c) => <Clip key={c.x} clip={c} light={t.light} dark={t.dark} />)}
        {t.selected && <LaneArt width="100%" height="152"><rect x="815" y="74" width="100%" height="2" fill={G} /></LaneArt>}
      </Lane>
    </TrackRow>
  );
}

export default function App() {
  return (
    <Page>
      <GlobalStyle />
      <TitleStrip />
      <Toolbar>
        <ModeSection $w={190}>
          <Tab $edge="top" $side="right" />
          <ModeLcd>
            <ModeGrid>
              <ModeButton>SHUFFLE</ModeButton>
              <ModeButton>SPOT</ModeButton>
              <ModeButton $on>SLIP</ModeButton>
              <ModeButton $menu><span>GRID</span><Tri c="#6aa81a" w={11} /></ModeButton>
            </ModeGrid>
          </ModeLcd>
          <Tab $edge="bottom" $side="right" />
        </ModeSection>
        <Section $w={170}>
          <ViewControls>
            <Group $h={51}>
              <GroupButton $w={21} aria-label="Alejar"><Side left /></GroupButton>
              <GroupButton aria-label="Zoom audio"><ZoomAudio /></GroupButton>
              <GroupButton aria-label="Zoom MIDI"><ZoomMidi /></GroupButton>
              <GroupButton $w={22} aria-label="Acercar"><Side /></GroupButton>
            </Group>
            <Rule />
            <Group $h={32}>
              {["1", "2", "3", "4", "5"].map((n) => <GroupButton key={n}>{n}</GroupButton>)}
            </Group>
          </ViewControls>
        </Section>
        <Section $w={419}>
          <ToolControls>
            <ToolRow>
              <ToolButton $w={60} $start aria-label="Zoom"><ToolMagnifier /></ToolButton>
              <SmartTool>
                <ToolButton $w={63} $start aria-label="Recortar"><ToolTrim /></ToolButton>
                <ToolButton $w={61} aria-label="Seleccionar"><ToolSelect /></ToolButton>
                <ToolButton $w={63} $on $end aria-label="Mover"><ToolHand /></ToolButton>
              </SmartTool>
              <ToolButton $w={61} aria-label="Escuchar"><ToolSpeaker /></ToolButton>
              <ToolButton $w={58} $end aria-label="Lápiz"><ToolPencil /></ToolButton>
            </ToolRow>
            <Rule />
            <OptionRow>
              {optionArt.map((art, i) => (
                <OptionButton key={i} $on={i === 3 || i === 4} aria-label={optionNames[i]}><svg width="50" height="32">{art}</svg></OptionButton>
              ))}
            </OptionRow>
          </ToolControls>
        </Section>
        <Section>
          <Counter>
            <CounterFace>
              <CounterTop>
                <MainTime>90:22.933<Tri c="#b9bdb5" /></MainTime>
                <Selection>
                  <dt>Inicio</dt><dd>90:22.933</dd>
                  <dt>Fin</dt><dd>90:22.933</dd>
                  <dt>Duración</dt><dd>0:00.000</dd>
                </Selection>
              </CounterTop>
              <CounterBottom>
                <CursorBox><span>Cursor</span>50:33.600</CursorBox>
                <NoteBox><Note c="#fff" /></NoteBox>
                <StatusBox>
                  <svg width="26" height="18" viewBox="0 0 26 18"><rect x="1" y="1" width="24" height="16" fill="#2c4d0a" stroke={LCD} strokeWidth="2" /><path d="M3 9H23M6 5V13M9 4V14M12 6V12M15 7V11M18 7V11M21 5V13" stroke={LCD} strokeWidth="1.500" /></svg>
                  <svg width="22" height="18" viewBox="0 0 22 18"><path d="M8 6L13 1H20V17H8Z" fill="#5b9a12" stroke={LCD} strokeWidth="1.500" /></svg>
                  Rtd.
                  <StatusFlag>S</StatusFlag>
                  <StatusFlag>M</StatusFlag>
                </StatusBox>
              </CounterBottom>
            </CounterFace>
          </Counter>
        </Section>
        <GridSection $w={76}>
          <Tab $edge="top" $side="left" />
          <NudgeLcd>
            <GridButton>Grid</GridButton>
            <NudgeLabel>Empuj</NudgeLabel>
          </NudgeLcd>
          <Tab $edge="bottom" $side="left" />
        </GridSection>
      </Toolbar>

      <Overview>
        <svg width="100%" height="28">
          {overviewRows.map((r) => r.s.map(([a, b]) => <rect key={`${r.y}-${a}`} x={a} y={r.y} width={b - a} height={r.h} fill={r.c} />))}
        </svg>
      </Overview>
      <OverviewBase />

      <Rulers>
        <RulerName><RulerLead /><RulerText>Compases|Tiempos</RulerText></RulerName>
        <RulerTrack><Marks data={bars} /></RulerTrack>
        <RulerName $on>
          <RulerLead><svg width="32" height="17" viewBox="0 0 32 17"><path d="M0 1H15V16H0M0 7H15M0 11H15" fill="none" stroke="#1a1a1a" strokeWidth="2" /><path d="M0 1H15V6H0Z" fill="#1a1a1a" /><path d="M19 5H31L25 12Z" fill="#161616" /></svg></RulerLead>
          <RulerText>Min:Segs</RulerText>
        </RulerName>
        <RulerTrack $bg="#69727b" $fg="#e6e8ea"><Marks data={minutes} /></RulerTrack>
        <RulerName><RulerLead /><RulerText>Código de tiempo</RulerText></RulerName>
        <RulerTrack><Marks data={timecode} /></RulerTrack>
        <RulerName><RulerLead /><RulerText>Muestras</RulerText></RulerName>
        <RulerTrack><Marks data={samples} /></RulerTrack>
        <RulerName><RulerLead><svg width="16" height="12" viewBox="0 0 16 12"><path d="M5 0L16 6 5 12Z" fill="#8a8a8a" /></svg></RulerLead><RulerText>Tempo</RulerText><Plus /></RulerName>
        <RulerTrack $bg="#8ba354" $fg="#1e2411">
          <TempoMark>
            <svg width="10" height="18" viewBox="0 0 10 18"><path d="M0 0L9 9 0 18Z" fill="#f01c0c" stroke="#6a1206" /></svg>
            <Note c="#000" />120
          </TempoMark>
        </RulerTrack>
        <RulerName><RulerLead /><RulerText>Compás</RulerText><Plus /></RulerName>
        <RulerTrack $bg="#5d7a9e" $fg="#12202f"><MeterMark>Predeterminado: 4/4</MeterMark></RulerTrack>
        <RulerName><RulerLead /><RulerText>Marcadores</RulerText><Plus /></RulerName>
        <RulerTrack $bg="#8a8a8a" />
      </Rulers>

      <Columns>
        <ColumnTools>
          <svg width="17" height="17" viewBox="0 0 17 17"><path d="M0 1.500H15.500V15.500H0M1.500 1V16M6 1V16M10.800 1V16" fill="none" stroke="#dcdcdc" strokeWidth="1.800" /></svg>
          <Tri c="#f0f0f0" />
          <Spacer />
          <Clock size={17} />
          <svg width="18" height="8" viewBox="0 0 18 8"><path d="M5 0H17L11 7Z" fill="#f0f0f0" /></svg>
        </ColumnTools>
        <ColumnHead>INSERTOS A-E</ColumnHead>
        <ColumnHead>E/S</ColumnHead>
        <ColumnBar />
        <ColumnBar $stripes />
      </Columns>

      <main>{tracks.map((t) => <Track key={t.name} t={t} />)}</main>
      <Footer><div /><div /></Footer>
    </Page>
  );
}
